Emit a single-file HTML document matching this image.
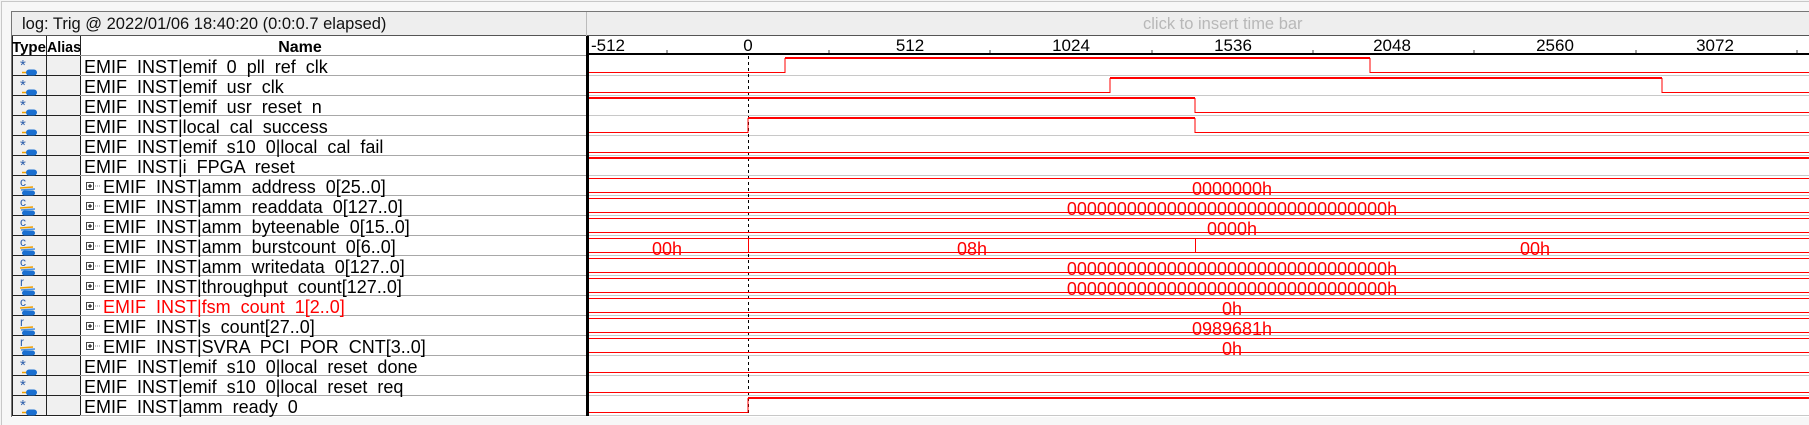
<!DOCTYPE html>
<html><head><meta charset="utf-8"><style>
html,body{margin:0;padding:0;}
body{width:1809px;height:425px;position:relative;overflow:hidden;background:#f4f4f4;font-family:"Liberation Sans",sans-serif;}
.abs{position:absolute;}
.nm{position:absolute;left:84px;font-size:18px;color:#000;white-space:pre;line-height:20px;}
</style></head><body>
<div class="abs" style="left:1px;top:1px;width:1808px;height:423px;border-left:1px solid #c8c8c8;border-top:1px solid #c8c8c8;background:#f7f7f7"></div>
<div class="abs" style="left:11px;top:11px;width:1798px;height:405px;border-left:1px solid #777;border-top:1px solid #777;background:#fff"></div>
<div class="abs" style="left:12px;top:12px;width:1797px;height:23px;background:#eeeeee;border-bottom:1px solid #555"></div>
<div class="abs" style="left:586px;top:12px;width:1px;height:24px;background:#bbb"></div>
<div class="abs" style="left:22px;top:13px;font-size:16.5px;line-height:22px;color:#111">log: Trig @ 2022/01/06 18:40:20 (0:0:0.7 elapsed)</div>
<div class="abs" style="left:1143px;top:13px;font-size:16.5px;line-height:22px;color:#b8b8b8">click to insert time bar</div>
<svg class="abs" style="left:0;top:0" width="1809" height="425" xmlns="http://www.w3.org/2000/svg" font-family="Liberation Sans, sans-serif">
<rect x="12" y="36" width="575" height="20" fill="#fff"/>
<rect x="12" y="56" width="68" height="360" fill="#f0f0f0"/>
<g stroke="#222" stroke-width="1">
<line x1="12.5" y1="36" x2="12.5" y2="416"/>
<line x1="46.5" y1="36" x2="46.5" y2="416"/>
<line x1="80.5" y1="36" x2="80.5" y2="416"/>
<line x1="12" y1="55.5" x2="80" y2="55.5"/>
</g>
<line x1="80" y1="55.5" x2="587" y2="55.5" stroke="#999"/>
<g stroke="#222">
<line x1="12" y1="75.5" x2="80" y2="75.5"/><line x1="12" y1="95.5" x2="80" y2="95.5"/><line x1="12" y1="115.5" x2="80" y2="115.5"/><line x1="12" y1="135.5" x2="80" y2="135.5"/><line x1="12" y1="155.5" x2="80" y2="155.5"/><line x1="12" y1="175.5" x2="80" y2="175.5"/><line x1="12" y1="195.5" x2="80" y2="195.5"/><line x1="12" y1="215.5" x2="80" y2="215.5"/><line x1="12" y1="235.5" x2="80" y2="235.5"/><line x1="12" y1="255.5" x2="80" y2="255.5"/><line x1="12" y1="275.5" x2="80" y2="275.5"/><line x1="12" y1="295.5" x2="80" y2="295.5"/><line x1="12" y1="315.5" x2="80" y2="315.5"/><line x1="12" y1="335.5" x2="80" y2="335.5"/><line x1="12" y1="355.5" x2="80" y2="355.5"/><line x1="12" y1="375.5" x2="80" y2="375.5"/><line x1="12" y1="395.5" x2="80" y2="395.5"/><line x1="12" y1="415.5" x2="80" y2="415.5"/>
</g>
<g stroke="#a8a8a8">
<line x1="80" y1="75.5" x2="587" y2="75.5"/><line x1="80" y1="95.5" x2="587" y2="95.5"/><line x1="80" y1="115.5" x2="587" y2="115.5"/><line x1="80" y1="135.5" x2="587" y2="135.5"/><line x1="80" y1="155.5" x2="587" y2="155.5"/><line x1="80" y1="175.5" x2="587" y2="175.5"/><line x1="80" y1="195.5" x2="587" y2="195.5"/><line x1="80" y1="215.5" x2="587" y2="215.5"/><line x1="80" y1="235.5" x2="587" y2="235.5"/><line x1="80" y1="255.5" x2="587" y2="255.5"/><line x1="80" y1="275.5" x2="587" y2="275.5"/><line x1="80" y1="295.5" x2="587" y2="295.5"/><line x1="80" y1="315.5" x2="587" y2="315.5"/><line x1="80" y1="335.5" x2="587" y2="335.5"/><line x1="80" y1="355.5" x2="587" y2="355.5"/><line x1="80" y1="375.5" x2="587" y2="375.5"/><line x1="80" y1="395.5" x2="587" y2="395.5"/><line x1="80" y1="415.5" x2="587" y2="415.5"/>
</g>
<g stroke="#c8c8c8">
<line x1="588" y1="75.5" x2="1809" y2="75.5"/><line x1="588" y1="95.5" x2="1809" y2="95.5"/><line x1="588" y1="115.5" x2="1809" y2="115.5"/><line x1="588" y1="135.5" x2="1809" y2="135.5"/><line x1="588" y1="155.5" x2="1809" y2="155.5"/><line x1="588" y1="175.5" x2="1809" y2="175.5"/><line x1="588" y1="195.5" x2="1809" y2="195.5"/><line x1="588" y1="215.5" x2="1809" y2="215.5"/><line x1="588" y1="235.5" x2="1809" y2="235.5"/><line x1="588" y1="255.5" x2="1809" y2="255.5"/><line x1="588" y1="275.5" x2="1809" y2="275.5"/><line x1="588" y1="295.5" x2="1809" y2="295.5"/><line x1="588" y1="315.5" x2="1809" y2="315.5"/><line x1="588" y1="335.5" x2="1809" y2="335.5"/><line x1="588" y1="355.5" x2="1809" y2="355.5"/><line x1="588" y1="375.5" x2="1809" y2="375.5"/><line x1="588" y1="395.5" x2="1809" y2="395.5"/><line x1="588" y1="415.5" x2="1809" y2="415.5"/>
</g>
<text x="12" y="52" font-size="15" font-weight="bold" fill="#000" textLength="34" lengthAdjust="spacingAndGlyphs">Type</text>
<text x="47" y="52" font-size="15" font-weight="bold" fill="#000" textLength="34" lengthAdjust="spacingAndGlyphs">Alias</text>
<text x="300" y="52" font-size="16" font-weight="bold" fill="#000" text-anchor="middle">Name</text>
<line x1="587" y1="54" x2="1809" y2="54" stroke="#000" stroke-width="2"/>
<g stroke="#000"><line x1="587.5" y1="36" x2="587.5" y2="416" stroke-width="3"/></g>
<g fill="#000" font-size="17" text-anchor="middle">
<text x="608" y="51">-512</text><text x="748" y="51">0</text><text x="910" y="51">512</text><text x="1071" y="51">1024</text><text x="1233" y="51">1536</text><text x="1392" y="51">2048</text><text x="1555" y="51">2560</text><text x="1715" y="51">3072</text>
</g>
<g stroke="#444"><line x1="667" y1="50" x2="667" y2="53"/><line x1="829" y1="50" x2="829" y2="53"/><line x1="990" y1="50" x2="990" y2="53"/><line x1="1152" y1="50" x2="1152" y2="53"/><line x1="1313" y1="50" x2="1313" y2="53"/><line x1="1474" y1="50" x2="1474" y2="53"/><line x1="1636" y1="50" x2="1636" y2="53"/><line x1="1797" y1="50" x2="1797" y2="53"/></g>
<line x1="748.5" y1="56" x2="748.5" y2="416" stroke="#000" stroke-dasharray="3,3"/>
<g fill="none" stroke="#f00" stroke-width="1">
<polyline points="589,72.5 785,72.5 785,58.5 1370,58.5 1370,72.5 1809,72.5"/>
<polyline points="589,92.5 1110,92.5 1110,78.5 1662,78.5 1662,92.5 1809,92.5"/>
<polyline points="589,98.5 1195,98.5 1195,112.5 1809,112.5"/>
<polyline points="589,132.5 748,132.5 748,118.5 1195,118.5 1195,132.5 1809,132.5"/>
<line x1="589" y1="152.5" x2="1809" y2="152.5"/>
</g>
<g stroke="#f00" stroke-width="2">
<line x1="785" y1="58" x2="1370" y2="58"/><line x1="1110" y1="78" x2="1662" y2="78"/><line x1="589" y1="98" x2="1195" y2="98"/><line x1="748" y1="118" x2="1195" y2="118"/><line x1="589" y1="158" x2="1809" y2="158"/><line x1="748" y1="398" x2="1809" y2="398"/></g>
<g stroke="#f00" stroke-width="1">
<line x1="589" y1="178.5" x2="1809" y2="178.5"/><line x1="589" y1="192.5" x2="1809" y2="192.5"/>
<line x1="589" y1="198.5" x2="1809" y2="198.5"/><line x1="589" y1="212.5" x2="1809" y2="212.5"/>
<line x1="589" y1="218.5" x2="1809" y2="218.5"/><line x1="589" y1="232.5" x2="1809" y2="232.5"/>
<line x1="589" y1="238.5" x2="1809" y2="238.5"/><line x1="589" y1="252.5" x2="1809" y2="252.5"/><line x1="748.5" y1="238" x2="748.5" y2="253"/><line x1="1195.5" y1="238" x2="1195.5" y2="253"/>
<line x1="589" y1="258.5" x2="1809" y2="258.5"/><line x1="589" y1="272.5" x2="1809" y2="272.5"/>
<line x1="589" y1="278.5" x2="1809" y2="278.5"/><line x1="589" y1="292.5" x2="1809" y2="292.5"/>
<line x1="589" y1="298.5" x2="1809" y2="298.5"/><line x1="589" y1="312.5" x2="1809" y2="312.5"/>
<line x1="589" y1="318.5" x2="1809" y2="318.5"/><line x1="589" y1="332.5" x2="1809" y2="332.5"/>
<line x1="589" y1="338.5" x2="1809" y2="338.5"/><line x1="589" y1="352.5" x2="1809" y2="352.5"/>
<line x1="589" y1="372.5" x2="1809" y2="372.5"/><line x1="589" y1="392.5" x2="1809" y2="392.5"/>
<polyline fill="none" points="589,412.5 748,412.5 748,398"/>
</g>
<g fill="#f00" font-size="18" text-anchor="middle">
<text x="1232" y="195">0000000h</text>
<text x="1232" y="215">00000000000000000000000000000000h</text>
<text x="1232" y="235">0000h</text>
<text x="667" y="255">00h</text><text x="972" y="255">08h</text><text x="1535" y="255">00h</text>
<text x="1232" y="275">00000000000000000000000000000000h</text>
<text x="1232" y="295">00000000000000000000000000000000h</text>
<text x="1232" y="315">0h</text>
<text x="1232" y="335">0989681h</text>
<text x="1232" y="355">0h</text>
</g>
<defs>
<g id="bit"><text x="20" y="14" font-size="15" fill="#2a5caa">*</text><line x1="22" y1="16.5" x2="28" y2="16.5" stroke="#f0a000" stroke-width="1.5"/><rect x="26" y="13.5" width="11" height="6" rx="3" fill="#1a6fd0"/></g>
<g id="bus"><text x="20" y="10" font-size="12" fill="#2a5caa">c</text><line x1="20" y1="12" x2="33" y2="11" stroke="#f0a000" stroke-width="1.5"/><line x1="21" y1="14" x2="35" y2="13" stroke="#4a90e0" stroke-width="1.5"/><rect x="22" y="14.5" width="13" height="5" rx="2.5" fill="#1a6fd0"/></g>
<g id="busr"><text x="20" y="10" font-size="12" fill="#2a5caa">r</text><line x1="20" y1="12" x2="33" y2="11" stroke="#f0a000" stroke-width="1.5"/><line x1="21" y1="14" x2="35" y2="13" stroke="#4a90e0" stroke-width="1.5"/><rect x="22" y="14.5" width="13" height="5" rx="2.5" fill="#1a6fd0"/></g>
<g id="plus"><rect x="86.5" y="6.5" width="7" height="7" fill="#fff" stroke="#444"/><line x1="88" y1="10" x2="92" y2="10" stroke="#000"/><line x1="90" y1="8" x2="90" y2="12" stroke="#000"/><line x1="95" y1="10" x2="100" y2="10" stroke="#888" stroke-dasharray="1,1"/></g>
</defs>
<use href="#bit" y="56"/><use href="#bit" y="76"/><use href="#bit" y="96"/><use href="#bit" y="116"/><use href="#bit" y="136"/><use href="#bit" y="156"/>
<use href="#bus" y="176"/><use href="#bus" y="196"/><use href="#bus" y="216"/><use href="#bus" y="236"/><use href="#bus" y="256"/><use href="#busr" y="276"/><use href="#bus" y="296"/><use href="#busr" y="316"/><use href="#busr" y="336"/>
<use href="#bit" y="356"/><use href="#bit" y="376"/><use href="#bit" y="396"/>
<use href="#plus" y="176"/><use href="#plus" y="196"/><use href="#plus" y="216"/><use href="#plus" y="236"/><use href="#plus" y="256"/><use href="#plus" y="276"/><use href="#plus" y="296"/><use href="#plus" y="316"/><use href="#plus" y="336"/>
</svg>
<div class="nm" style="top:57px">EMIF  INST|emif  0  pll  ref  clk</div>
<div class="nm" style="top:77px">EMIF  INST|emif  usr  clk</div>
<div class="nm" style="top:97px">EMIF  INST|emif  usr  reset  n</div>
<div class="nm" style="top:117px">EMIF  INST|local  cal  success</div>
<div class="nm" style="top:137px">EMIF  INST|emif  s10  0|local  cal  fail</div>
<div class="nm" style="top:157px">EMIF  INST|i  FPGA  reset</div>
<div class="nm" style="top:177px;left:103px">EMIF  INST|amm  address  0[25..0]</div>
<div class="nm" style="top:197px;left:103px">EMIF  INST|amm  readdata  0[127..0]</div>
<div class="nm" style="top:217px;left:103px">EMIF  INST|amm  byteenable  0[15..0]</div>
<div class="nm" style="top:237px;left:103px">EMIF  INST|amm  burstcount  0[6..0]</div>
<div class="nm" style="top:257px;left:103px">EMIF  INST|amm  writedata  0[127..0]</div>
<div class="nm" style="top:277px;left:103px">EMIF  INST|throughput  count[127..0]</div>
<div class="nm" style="top:297px;left:103px;color:#f00">EMIF  INST|fsm  count  1[2..0]</div>
<div class="nm" style="top:317px;left:103px">EMIF  INST|s  count[27..0]</div>
<div class="nm" style="top:337px;left:103px">EMIF  INST|SVRA  PCI  POR  CNT[3..0]</div>
<div class="nm" style="top:357px">EMIF  INST|emif  s10  0|local  reset  done</div>
<div class="nm" style="top:377px">EMIF  INST|emif  s10  0|local  reset  req</div>
<div class="nm" style="top:397px">EMIF  INST|amm  ready  0</div>
</body></html>
